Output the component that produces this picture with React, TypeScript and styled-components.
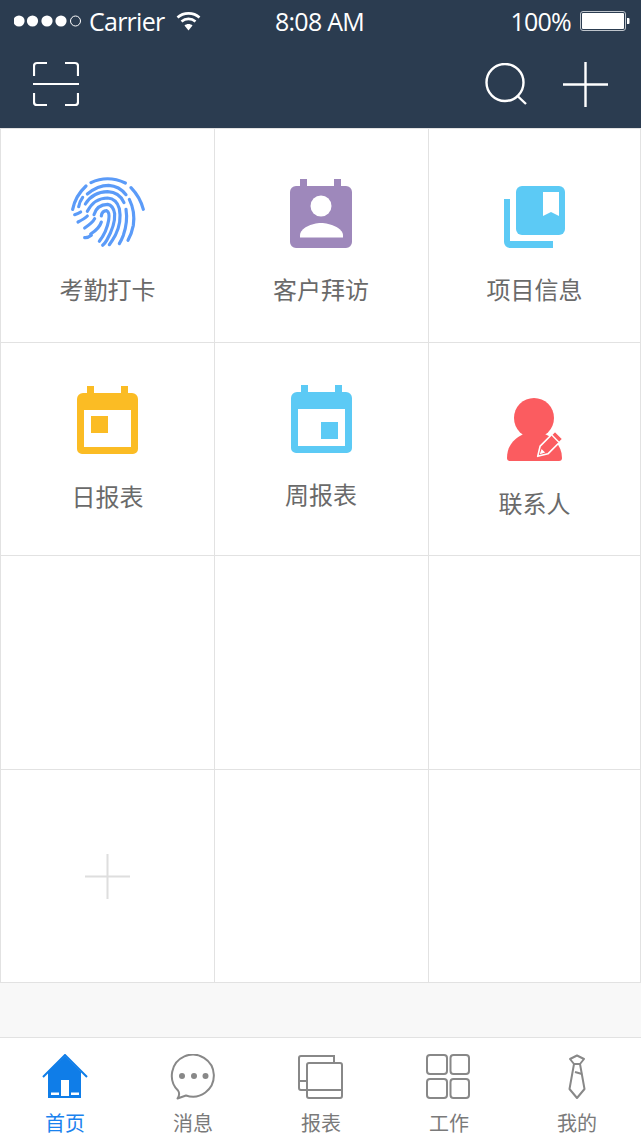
import React from "react";
import styled, { createGlobalStyle } from "styled-components";

const Global = createGlobalStyle`
  html, body { margin: 0; padding: 0; background: #fff; }
  #root { width: 641px; height: 1137px; overflow: hidden; }
`;

const Page = styled.div`
  display: flex;
  flex-direction: column;
  width: 641px;
  height: 1137px;
  font-family: "Noto Sans CJK SC", "Noto Sans", sans-serif;
  background: #f8f8f8;
`;

const Header = styled.header`
  height: 128px;
  background: #2b3c50;
  color: #fff;
  flex: none;
`;

const StatusBar = styled.div`
  display: grid;
  grid-template-columns: 261px auto 1fr;
  align-items: center;
  height: 42px;
  padding: 0 11px 0 14px;
  font-family: "Open Sans", sans-serif;
  font-size: 25px;
  letter-spacing: -0.75px;
`;

const StatusLeft = styled.div`
  display: flex;
  align-items: center;
`;

const Carrier = styled.span`
  margin: 0 12px 0 7px;
`;

const StatusRight = styled.div`
  display: flex;
  align-items: center;
  justify-content: flex-end;
  gap: 9px;
`;

const NavBar = styled.div`
  display: flex;
  align-items: center;
  justify-content: space-between;
  height: 46px;
  margin-top: 19px;
  padding: 0 33px;
`;

const NavRight = styled.div`
  display: flex;
  align-items: center;
  gap: 36px;
`;

const Grid = styled.div`
  display: grid;
  grid-template-columns: 214px 214px 1fr;
  grid-template-rows: 214px 213px 214px 213px;
  flex: none;
  background: #fff;
  border-top: 1px solid #e2e2e2;
  border-left: 1px solid #e2e2e2;
`;

const Tile = styled.div<{ $top?: number; $gap?: number }>`
  display: flex;
  flex-direction: column;
  align-items: center;
  box-sizing: border-box;
  padding-top: ${(p) => p.$top ?? 0}px;
  gap: ${(p) => p.$gap ?? 0}px;
  border-right: 1px solid #e2e2e2;
  border-bottom: 1px solid #e2e2e2;
  &:nth-child(3n + 2) {
    padding-right: 1px;
  }
`;

const AddTile = styled(Tile)`
  justify-content: center;
  padding-right: 1px;
`;

const TileLabel = styled.span`
  font-size: 24px;
  line-height: 34px;
  color: #6a6a6a;
  font-weight: 400;
`;

const Spacer = styled.div`
  flex: 1;
`;

const TabBar = styled.nav`
  display: grid;
  grid-template-columns: repeat(5, 128px);
  height: 100px;
  padding: 0 0 0 1px;
  box-sizing: border-box;
  flex: none;
  background: #fff;
  border-top: 1px solid #e2e2e2;
`;

const Tab = styled.div`
  display: flex;
  flex-direction: column;
  align-items: center;
  padding-top: 16px;
  gap: 11px;
`;

const TabLabel = styled.span<{ $active?: boolean }>`
  font-size: 20px;
  line-height: 24px;
  color: ${(p) => (p.$active ? "#1a82ee" : "#7a7a7a")};
`;

const Signal = () => (
  <svg width="68" height="14" viewBox="0 0 68 14">
    {[5, 18.5, 33, 47].map((x) => (
      <circle key={x} cx={x} cy="7" r="5.6" fill="#fff" />
    ))}
    <circle cx="61.5" cy="7" r="5" fill="none" stroke="#fff" strokeWidth="1" />
  </svg>
);

const Wifi = () => (
  <svg width="25" height="20" viewBox="0 0 25 20" fill="none" stroke="#fff" strokeWidth="2.6">
    <path d="M1.5 6.5C7.5 1 17.5 1 23.5 6.5" />
    <path d="M5.5 10.5C9.5 7 15.5 7 19.5 10.5" />
    <path d="M12.5 19.5L8.5 14.5C10.5 12.5 14.5 12.5 16.5 14.5Z" fill="#fff" stroke="none" />
  </svg>
);

const Battery = () => (
  <svg width="50" height="20" viewBox="0 0 50 20">
    <rect x="0.5" y="0.5" width="45" height="19" rx="2.5" fill="none" stroke="#bfc5cc" />
    <rect x="2" y="2" width="42" height="16" rx="1" fill="#fff" />
    <path d="M47 7h1.5a1 1 0 0 1 1 1v4a1 1 0 0 1-1 1H47Z" fill="#fff" />
  </svg>
);

const ScanIcon = () => (
  <svg width="46" height="46" viewBox="0 0 46 46" fill="none" stroke="#fff" strokeWidth="2.2">
    <path d="M1 15V5a3 3 0 0 1 3-3h10" />
    <path d="M32 2h10a3 3 0 0 1 3 3v10" />
    <path d="M1 32v9a3 3 0 0 0 3 3h10" />
    <path d="M32 44h10a3 3 0 0 0 3-3V32" />
    <path d="M0 23h46" />
  </svg>
);

const SearchIcon = () => (
  <svg width="42" height="42" viewBox="0 0 42 42" fill="none" stroke="#fff" strokeWidth="2.4">
    <circle cx="20" cy="19.5" r="18.5" />
    <path d="M32 32.5l9 8.5" />
  </svg>
);

const PlusIcon = ({ size, color, sw }: { size: number; color: string; sw: number }) => (
  <svg width={size} height={size} viewBox={`0 0 ${size} ${size}`} stroke={color} strokeWidth={sw}>
    <path d={`M${size / 2} 0V${size}M0 ${size / 2}H${size}`} />
  </svg>
);

const Fingerprint = () => (
  <svg width="74" height="74" viewBox="15 15 222 222" fill="none" stroke="#5b9bf8" strokeWidth="9.500" strokeLinecap="round">
    <path d="M75 32Q125 8 178 33" />
    <path d="M195 47Q222 75 232 112" />
    <path d="M60 42Q28 72 20 112" />
    <path d="M64 66Q95 40 128 40Q160 42 180 68" />
    <path d="M50 76Q40 90 38 104" />
    <path d="M190 82Q208 118 202 160Q197 185 186 205" />
    <path d="M58 96Q80 60 125 59Q160 60 174 92" />
    <path d="M180 112Q186 150 172 190Q166 205 160 215" />
    <path d="M64 118Q85 78 125 78Q152 80 160 110Q168 150 148 190Q140 205 130 218" />
    <path d="M84 128Q92 98 125 97Q142 100 146 125Q148 160 122 205Q116 215 110 220" />
    <path d="M106 132Q108 116 122 116Q132 120 128 145Q122 180 100 208" />
    <path d="M106 150Q100 170 74 186" />
    <path d="M86 140Q80 152 56 168" />
    <path d="M64 132Q56 140 36 150" />
    <path d="M44 120Q38 124 26 128" />
    <path d="M76 190Q66 198 56 197" />
  </svg>
);

const ContactIcon = () => (
  <svg width="62" height="69" viewBox="290 179 62 69">
    <path d="M300 179h7v7h27v-7h7v7h5a6 6 0 0 1 6 6v50a6 6 0 0 1-6 6h-50a6 6 0 0 1-6-6v-50a6 6 0 0 1 6-6h4Z" fill="#9e88bb" />
    <circle cx="321" cy="206" r="10.5" fill="#fff" />
    <path d="M300 237.500v-2C300 228 312 223 321 223s22 5 22 12.500v2Z" fill="#fff" />
  </svg>
);

const BookIcon = () => (
  <svg width="62" height="62" viewBox="504 186 62 62">
    <path d="M504 199h6v42h43v7h-43a6 6 0 0 1-6-6Z" fill="#5ccaf5" />
    <rect x="516" y="186" width="49" height="49" rx="6" fill="#5ccaf5" />
    <path d="M543 192h16v24l-8-4-8 4Z" fill="#fff" />
  </svg>
);

const CalendarIcon = ({ color, sx, sy }: { color: string; sx: number; sy: number }) => (
  <svg width="61" height="68" viewBox="0 0 61 68">
    <path d="M10 0h7v7h27v-7h7v7h4a6 6 0 0 1 6 6v50a5 5 0 0 1-5 5h-51a5 5 0 0 1-5-5v-50a6 6 0 0 1 6-6h4Z" fill={color} />
    <rect x="7" y="24" width="47" height="37" fill="#fff" />
    <rect x={sx} y={sy} width="17" height="17" fill={color} />
  </svg>
);

const ContactEditIcon = () => (
  <svg width="58" height="63" viewBox="506 398 58 63">
    <circle cx="534" cy="418" r="20" fill="#fb5c60" />
    <path d="M507 458C507 443 518 436 526 433H542C552 436 562 445 562 458Q562 461 559 461H510Q507 461 507 458Z" fill="#fb5c60" />
    <g transform="rotate(45 549 445)">
      <path d="M543.500 431h11v21l-5.500 9-5.500-9Z" fill="#fb5c60" stroke="#fff" strokeWidth="1.600" strokeLinejoin="round" />
      <path d="M544 436h10" stroke="#fff" strokeWidth="1.400" />
      <path d="M546.500 453h5l-2.500 5Z" fill="#fff" />
    </g>
  </svg>
);

const HomeIcon = () => (
  <svg width="50" height="46" viewBox="40 1054 50 46">
    <path d="M43 1077L65 1055L87 1077" fill="none" stroke="#0f7de8" strokeWidth="2" />
    <path d="M65 1056L81 1072V1098H48V1072Z" fill="#0f7de8" />
    <rect x="61" y="1080" width="8" height="16" fill="#fff" />
    <rect x="51" y="1092.500" width="8" height="2.500" fill="#fff" />
    <rect x="71" y="1092.500" width="8" height="2.500" fill="#fff" />
  </svg>
);

const MessageIcon = () => (
  <svg width="50" height="46" viewBox="167 1054 50 46">
    <path d="M177 1090.500A21 21 0 1 1 185 1095.500L176.500 1098.500Q179.500 1094 177 1090.500Z" fill="none" stroke="#888" strokeWidth="2" strokeLinejoin="round" />
    <circle cx="181" cy="1076" r="3" fill="#888" />
    <circle cx="193" cy="1076" r="3" fill="#888" />
    <circle cx="204.500" cy="1076" r="3" fill="#888" />
  </svg>
);

const ReportIcon = () => (
  <svg width="50" height="46" viewBox="296 1054 50 46" fill="none" stroke="#888" strokeWidth="2">
    <path d="M334 1062V1056H301a2 2 0 0 0-2 2V1088a2 2 0 0 0 2 2H306" />
    <path d="M299 1081H306" />
    <rect x="307" y="1063" width="35" height="35" rx="2" />
    <path d="M307 1090H342" />
  </svg>
);

const WorkIcon = () => (
  <svg width="50" height="46" viewBox="424 1054 50 46" fill="none" stroke="#888" strokeWidth="2">
    <rect x="427" y="1055" width="20" height="19" rx="3" />
    <rect x="450.500" y="1055" width="18.500" height="19" rx="3" />
    <rect x="427" y="1079" width="20" height="19" rx="3" />
    <rect x="450.500" y="1079" width="18.500" height="19" rx="3" />
  </svg>
);

const TieIcon = () => (
  <svg width="50" height="46" viewBox="552 1054 50 46" fill="none" stroke="#888" strokeWidth="2" strokeLinejoin="round">
    <path d="M570 1059L577 1055.500L584 1059L580 1064H574Z" />
    <path d="M574 1064L569.500 1089L577 1098L584.500 1089L580 1064" />
    <path d="M575 1072L582 1074" />
  </svg>
);

const tiles = [
  { label: "考勤打卡", top: 48, gap: 21, icon: <Fingerprint /> },
  { label: "客户拜访", top: 50, gap: 24, icon: <ContactIcon /> },
  { label: "项目信息", top: 57, gap: 24, icon: <BookIcon /> },
  { label: "日报表", top: 43, gap: 25, icon: <CalendarIcon color="#fbbc24" sx={14} sy={30} /> },
  { label: "周报表", top: 42, gap: 24, icon: <CalendarIcon color="#5ccaf5" sx={30} sy={37} /> },
  { label: "联系人", top: 55, gap: 25, icon: <ContactEditIcon /> },
];

const tabs = [
  { label: "首页", icon: <HomeIcon />, active: true },
  { label: "消息", icon: <MessageIcon /> },
  { label: "报表", icon: <ReportIcon /> },
  { label: "工作", icon: <WorkIcon /> },
  { label: "我的", icon: <TieIcon /> },
];

export default function App() {
  return (
    <Page>
      <Global />
      <Header>
        <StatusBar>
          <StatusLeft>
            <Signal />
            <Carrier>Carrier</Carrier>
            <Wifi />
          </StatusLeft>
          <span>8:08 AM</span>
          <StatusRight>
            <span>100%</span>
            <Battery />
          </StatusRight>
        </StatusBar>
        <NavBar>
          <ScanIcon />
          <NavRight>
            <SearchIcon />
            <PlusIcon size={45} color="#fff" sw={2.4} />
          </NavRight>
        </NavBar>
      </Header>
      <Grid>
        {tiles.map((t) => (
          <Tile key={t.label} $top={t.top} $gap={t.gap}>
            {t.icon}
            <TileLabel>{t.label}</TileLabel>
          </Tile>
        ))}
        <Tile />
        <Tile />
        <Tile />
        <AddTile>
          <PlusIcon size={45} color="#dedede" sw={2} />
        </AddTile>
        <Tile />
        <Tile />
      </Grid>
      <Spacer />
      <TabBar>
        {tabs.map((t) => (
          <Tab key={t.label}>
            {t.icon}
            <TabLabel $active={t.active}>{t.label}</TabLabel>
          </Tab>
        ))}
      </TabBar>
    </Page>
  );
}
